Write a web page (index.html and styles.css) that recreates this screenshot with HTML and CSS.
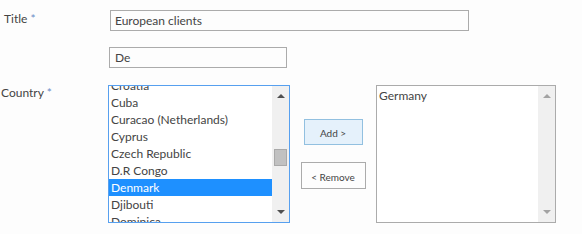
FILE: index.html
```html
<!DOCTYPE html>
<html>
<head>
    <title>Country picker</title>
    <link rel="stylesheet" href="styles.css">
</head>
<body>
    <div class="form">
        <div class="form-row title-row">
            <div class="label">Title <span class="req">*</span></div>
            <input type="text" class="text-input title-input" value="European clients">
        </div>

        <div class="form-row filter-row">
            <div class="label"></div>
            <input type="text" class="text-input filter-input" value="De">
        </div>

        <div class="form-row country-row">
            <div class="label">Country <span class="req">*</span></div>

            <div class="listbox listbox-active">
                <div class="list-items">
                    <ul class="options scrolled">
                        <li>Croatia</li>
                        <li>Cuba</li>
                        <li>Curacao (Netherlands)</li>
                        <li>Cyprus</li>
                        <li>Czech Republic</li>
                        <li>D.R Congo</li>
                        <li class="selected">Denmark</li>
                        <li>Djibouti</li>
                        <li>Dominica</li>
                    </ul>
                </div>
                <div class="scrollbar">
                    <span class="arrow up"></span>
                    <div class="track">
                        <div class="thumb"></div>
                    </div>
                    <span class="arrow down"></span>
                </div>
            </div>

            <div class="actions">
                <button class="btn btn-add">Add &gt;</button>
                <button class="btn btn-remove">&lt; Remove</button>
            </div>

            <div class="listbox listbox-chosen">
                <div class="list-items">
                    <ul class="options">
                        <li>Germany</li>
                    </ul>
                </div>
                <div class="scrollbar disabled">
                    <span class="arrow up"></span>
                    <div class="track"></div>
                    <span class="arrow down"></span>
                </div>
            </div>
        </div>
    </div>
</body>
</html>
```

FILE: styles.css
```css
body {
    margin: 0;
    background: #fdfdfd;
    font-family: 'Segoe UI', Lato, 'Noto Sans', sans-serif;
    font-size: 12px;
    color: #444;
}

.form {
    padding-top: 10px;
}

.form-row {
    display: flex;
    align-items: flex-start;
}

.label {
    width: 110px;
    padding-left: 4px;
    box-sizing: border-box;
    flex-shrink: 0;
    color: #444;
}

.req {
    color: #6b8cc7;
}

.title-row .label {
    padding-top: 1px;
}

.text-input {
    font-family: inherit;
    font-size: 12px;
    color: #444;
    border: 1px solid #ababab;
    background: #fdfdfd;
    padding: 0 4px;
    margin: 0;
    height: 21px;
    box-sizing: border-box;
    outline: none;
}

.title-input {
    width: 359px;
}

.filter-row {
    margin-top: 16px;
}

.filter-row .label {
    width: 109px;
}

.filter-input {
    width: 178px;
    padding-left: 5px;
}

.country-row {
    margin-top: 17px;
}

.country-row .label {
    width: 108px;
    padding-left: 1px;
}

.listbox {
    display: flex;
    height: 138px;
    box-sizing: border-box;
    border: 1px solid #ababab;
    background: #fff;
}

.listbox-active {
    width: 182px;
    border-color: #57a0ef;
}

.listbox-chosen {
    width: 180px;
}

.list-items {
    flex: 1;
    overflow: hidden;
}

.options {
    list-style: none;
    margin: 0;
    padding: 0;
}

.options.scrolled {
    margin-top: -9px;
}

.options li {
    height: 17px;
    line-height: 17px;
    padding-left: 2px;
    white-space: nowrap;
}

.listbox-chosen .options li {
    height: 20px;
    line-height: 20px;
}

.options li.selected {
    background: #1e90ff;
    color: #fff;
}

.scrollbar {
    width: 17px;
    display: flex;
    flex-direction: column;
    align-items: center;
    background: #f0f0f0;
}

.track {
    flex: 1;
    width: 100%;
    display: flex;
    flex-direction: column;
    align-items: center;
}

.thumb {
    margin-top: 43px;
    margin-right: 1px;
    width: 13px;
    height: 17px;
    background: #c1c1c1;
    border: 1px solid #a9a9a9;
    box-sizing: border-box;
}

.arrow {
    width: 0;
    height: 0;
    border-left: 4px solid transparent;
    border-right: 4px solid transparent;
    margin: 8px 0;
}

.arrow.up {
    border-bottom: 4px solid #505050;
}

.arrow.down {
    border-top: 4px solid #505050;
}

.disabled .arrow.up {
    border-bottom-color: #a3a3a3;
}

.disabled .arrow.down {
    border-top-color: #a3a3a3;
}

.actions {
    width: 86px;
    display: flex;
    flex-direction: column;
    align-items: center;
    padding-top: 34px;
    gap: 17px;
}

.btn {
    font-family: inherit;
    font-size: 10px;
    color: #444;
    background: #fdfdfd;
    border: 1px solid #ababab;
    padding: 2px 0 0;
    margin: 0;
    cursor: pointer;
}

.btn-add {
    width: 59px;
    height: 26px;
    background: #e5f1fb;
    border-color: #92c0e0;
}

.btn-remove {
    width: 65px;
    height: 27px;
}
```
